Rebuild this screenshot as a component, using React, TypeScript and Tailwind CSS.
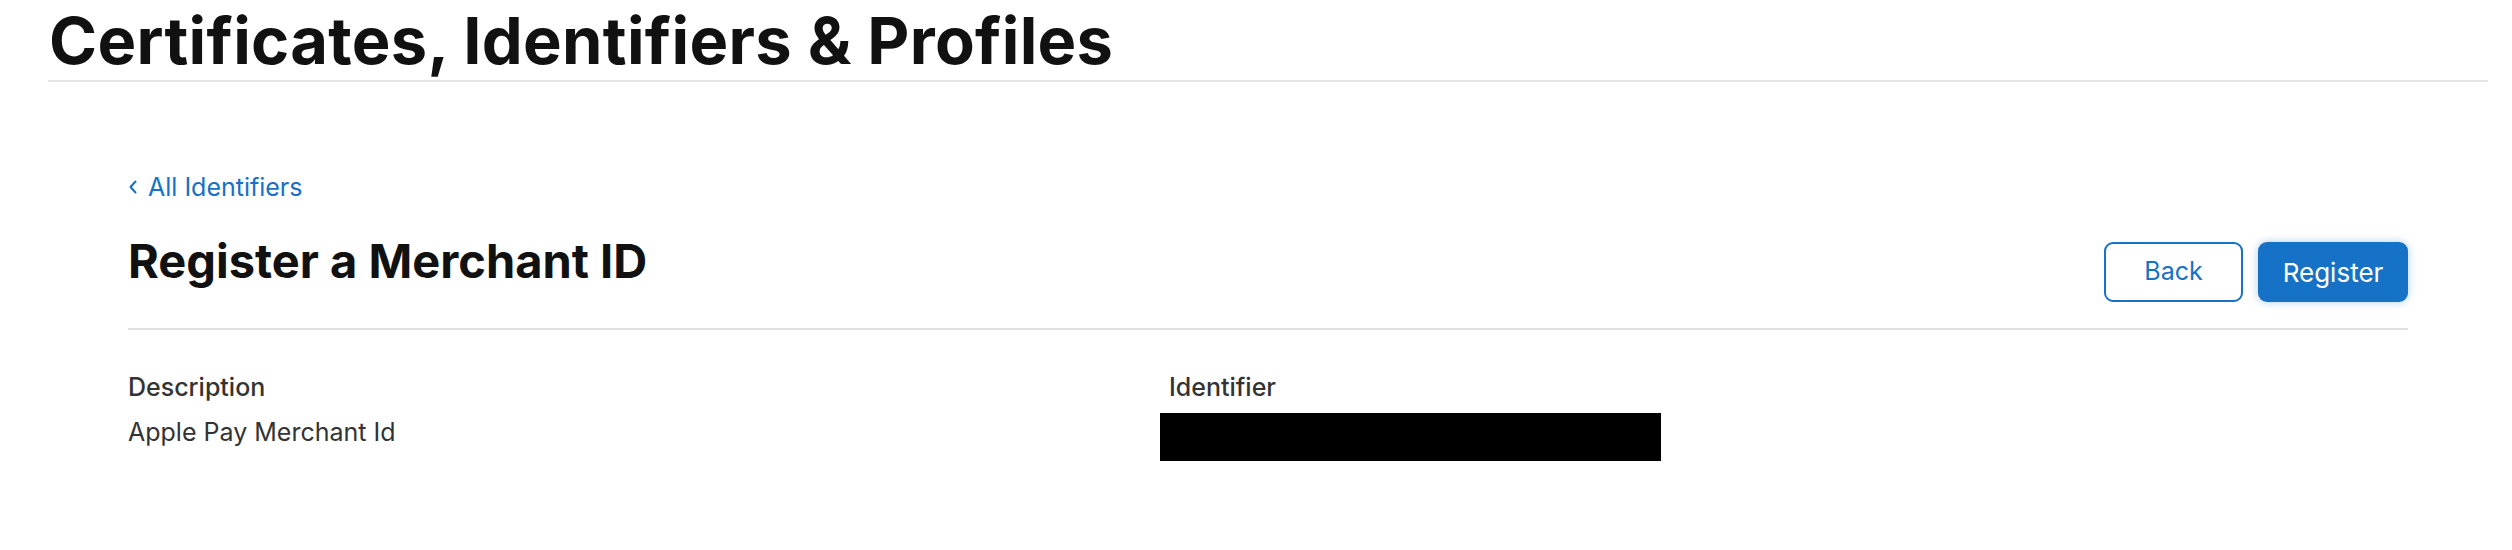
export default function App() {
  return (
    <div className="w-[2512px] h-[550px] bg-white font-['Inter',sans-serif] text-[#1d1d1f]">
      <header className="ml-[48px] mr-[24px] border-b-2 border-[#e5e5e5] pt-[7px] pb-[5px]">
        <h1 className="pl-[1px] text-[65px] leading-[68px] font-bold tracking-[0.3px] text-[#111111]">
          Certificates, Identifiers &amp; Profiles
        </h1>
      </header>
      <main className="ml-[128px] mr-[104px]">
        <a className="mt-[90px] flex items-center gap-[11px] text-[25px] leading-[30px] text-[#1671c7]">
          <svg width="8" height="14" viewBox="0 0 8 14" className="ml-[1px]">
            <path d="M6.5 1.5 L1.5 7 L6.5 12.5" fill="none" stroke="currentColor" strokeWidth="2" strokeLinecap="round" strokeLinejoin="round" />
          </svg>
          <span>All Identifiers</span>
        </a>
        <div className="mt-[32px] flex items-start justify-between border-b-2 border-[#e0e0e0] pb-[26px]">
          <h2 className="text-[47px] leading-[53px] font-bold text-[#111111]">Register a Merchant ID</h2>
          <div className="mt-[8px] flex gap-[15px]">
            <button className="h-[60px] w-[139px] rounded-[9px] border-2 border-[#1671c7] bg-white text-[25px] text-[#1671c7]">
              Back
            </button>
            <button className="h-[60px] w-[150px] rounded-[9px] bg-[#1572c6] text-[26px] text-white shadow-[0_0_8px_rgba(21,114,198,0.35)]">
              Register
            </button>
          </div>
        </div>
        <div className="mt-[42px] grid grid-cols-[1041px_1fr] text-[25px] leading-[30px] text-[#333333]">
          <div>
            <div className="font-medium">Description</div>
            <div className="mt-[15px]">Apple Pay Merchant Id</div>
          </div>
          <div>
            <div className="font-medium">Identifier</div>
            <div className="mt-[11px] ml-[-9px] h-[48px] w-[501px] bg-black" />
          </div>
        </div>
      </main>
    </div>
  );
}
